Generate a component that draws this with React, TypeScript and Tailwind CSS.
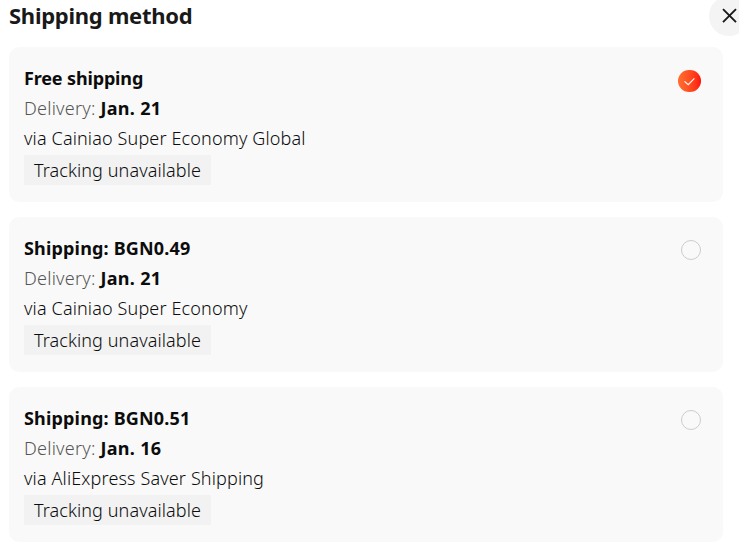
import { useState } from 'react';
import { clsx } from 'clsx';

interface ShippingOption {
  id: string;
  title: string;
  date: string;
  carrier: string;
  free?: boolean;
}

const OPTIONS: ShippingOption[] = [
  { id: 'global', title: 'Free shipping', date: 'Jan. 21', carrier: 'via Cainiao Super Economy Global', free: true },
  { id: 'economy', title: 'Shipping: BGN0.49', date: 'Jan. 21', carrier: 'via Cainiao Super Economy' },
  { id: 'saver', title: 'Shipping: BGN0.51', date: 'Jan. 16', carrier: 'via AliExpress Saver Shipping' },
];

function Radio({ checked }: { checked: boolean }) {
  if (!checked) {
    return <span className="mt-[7px] h-5 w-5 shrink-0 rounded-full border border-[#ccc]" />;
  }
  return (
    <span className="mt-[7px] h-[22px] w-[23px] shrink-0 rounded-full bg-linear-to-r from-[#ff6f31] to-[#ff0a0a]">
      <svg className="h-[22px] w-[23px]" viewBox="0 0 23 22" fill="none" stroke="#fff" strokeWidth="1.1">
        <path d="M6.5 11.3l3.7 3.4 6.2-6.4" />
      </svg>
    </span>
  );
}

export default function App() {
  const [selected, setSelected] = useState('global');

  return (
    <div className="h-[555px] w-[739px] overflow-hidden bg-white font-['Noto_Sans',sans-serif] text-[18px] font-light text-[#0c0c0c]">
      <header className="flex h-[47px] justify-between pl-[9px]">
        <h2 className="-mt-px text-[22px] leading-[32px] font-bold tracking-[-0.27px] whitespace-nowrap text-[#191919]">
          Shipping method
        </h2>
        <button
          className="-mt-[4px] -mr-[10px] flex h-10 w-10 shrink-0 items-center justify-center rounded-full bg-[#f4f4f4]"
          title="Close"
        >
          <svg className="h-4 w-4" viewBox="0 0 16 16" fill="none" stroke="#191919" strokeWidth="1.9">
            <path d="M2 1.2l13 13M15 1.2l-13 13" />
          </svg>
        </button>
      </header>

      <div className="flex flex-col gap-[15px] pr-4 pl-[9px]">
        {OPTIONS.map((option) => (
          <button
            key={option.id}
            onClick={() => setSelected(option.id)}
            className="flex h-[155px] items-start justify-between rounded-[10px] bg-[#f9f9f9] pt-4 pr-[22px] pl-[15px] text-left"
          >
            <div className="leading-[30px] tracking-[0.14px] whitespace-nowrap">
              <p className={clsx('font-bold', option.free ? 'tracking-[-0.15px]' : 'tracking-[0.17px]')}>
                {option.title}
              </p>
              <p className="tracking-[0.24px]">
                <span className="text-[#555]">Delivery:</span>{' '}
                <b className="font-bold tracking-[0.3px]">{option.date}</b>
              </p>
              <p>{option.carrier}</p>
              <p className="mt-[2px] h-[30px] w-[187px] bg-[#f2f2f2] px-[10px] tracking-[0.1px]">Tracking unavailable</p>
            </div>
            <Radio checked={selected === option.id} />
          </button>
        ))}
      </div>
    </div>
  );
}
